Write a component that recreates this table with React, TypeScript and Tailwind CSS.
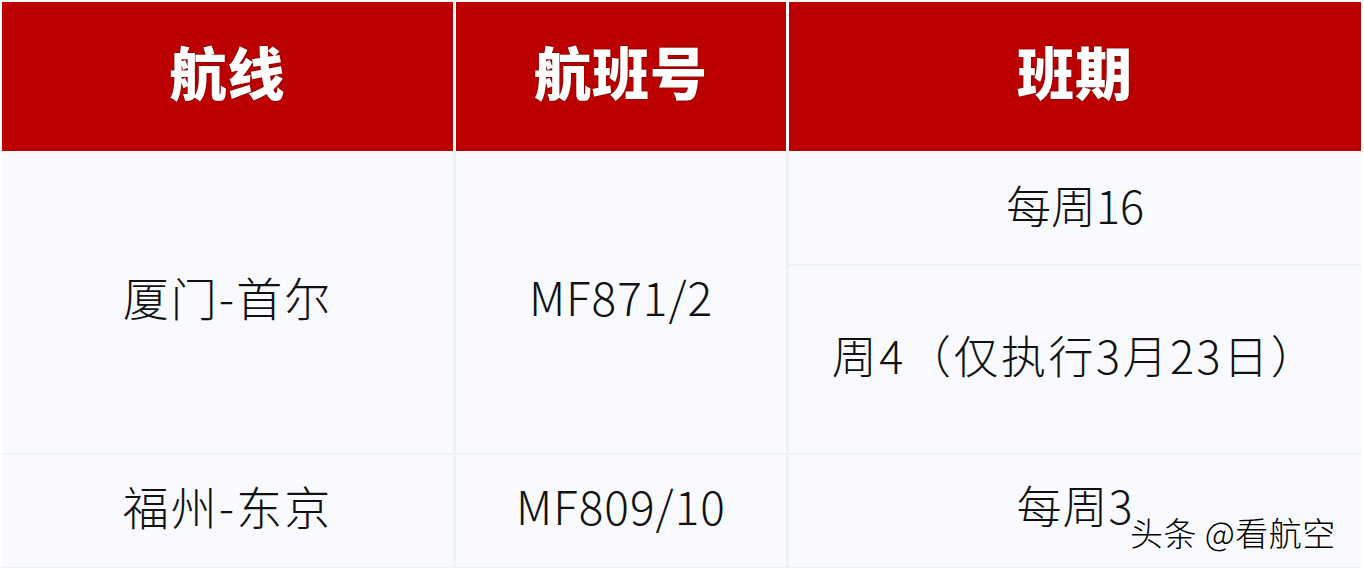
import React from "react";

const cjk = { fontFamily: '"Noto Sans CJK SC", "Noto Sans", sans-serif' };

export default function App() {
  return (
    <div className="w-[1364px] h-[570px] bg-white overflow-hidden relative" style={cjk}>
      <div className="pt-[2px] pl-[2px] w-[1361px]">
        <div className="grid grid-cols-[451px_330px_1fr] gap-x-[3px] gap-y-[2px] bg-white">
          {["航线", "航班号", "班期"].map((t) => (
            <div
              key={t}
              className="h-[149px] bg-[#bc0000] flex items-center justify-center text-white text-[57px] font-black tracking-[1px] pb-[12px]"
              style={{ textShadow: "0 0 2px #5a0000" }}
            >
              {t}
            </div>
          ))}
        </div>
        <div className="grid grid-cols-[451px_330px_1fr] grid-rows-[112px_187px_112px] gap-x-[3px] gap-y-[2px] bg-[#eef2f6] mt-[1px] pb-[1px] text-[#111] font-extralight">
          <div className="row-span-2 bg-[#f8fafd] flex items-center justify-center text-[46px] tracking-[2px] pb-[12px]">厦门-首尔</div>
          <div className="row-span-2 bg-[#f8fafd] flex items-center justify-center text-[46px] tracking-[1px] pb-[12px]">MF871/2</div>
          <div className="bg-[#f8fafd] flex items-center justify-center text-[45px] pb-[6px]">每周16</div>
          <div className="bg-[#f8fafd] flex items-center justify-center text-[45px] tracking-[2.5px] pb-[10px]">周4（仅执行3月23日）</div>
          <div className="bg-[#f8fafd] flex items-center justify-center text-[46px] tracking-[2px] pb-[12px]">福州-东京</div>
          <div className="bg-[#f8fafd] flex items-center justify-center text-[46px] tracking-[1px] pb-[12px]">MF809/10</div>
          <div className="bg-[#f8fafd] flex items-center justify-center text-[45px] tracking-[1px] pb-[12px]">每周3</div>
        </div>
      </div>
      <div
        className="absolute left-[1130px] top-[508px] text-[33px] tracking-[0.5px] text-black font-light whitespace-nowrap"
        style={{ textShadow: "0 0 2px #fff, 0 0 2px #fff" }}
      >
        头条 @看航空
      </div>
    </div>
  );
}
